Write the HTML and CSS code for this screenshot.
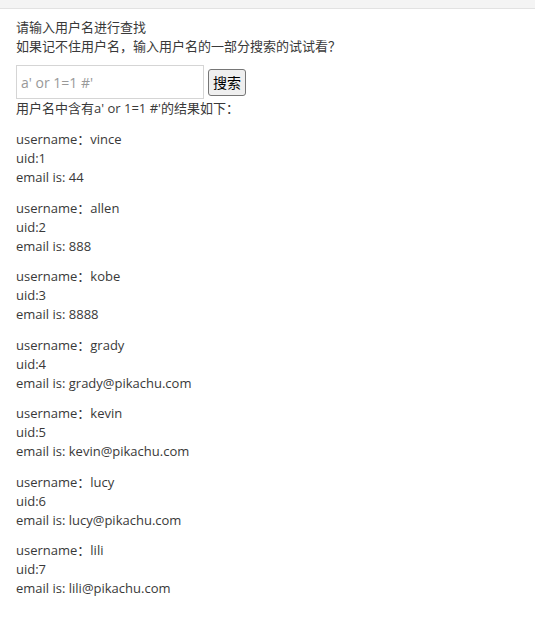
FILE: index.html
```html
<!DOCTYPE html>
<html>
<head>
<meta charset="utf-8">
<link rel="stylesheet" href="styles.css">
</head>
<body>
<div class="topbar"></div>
<div class="main">
  <div class="intro">
    <p class="line">请输入用户名进行查找</p>
    <p class="line">如果记不住用户名，输入用户名的一部分搜索的试试看？</p>
  </div>
  <form class="search">
    <input class="field" type="text" placeholder="a' or 1=1 #'">
    <button class="btn" type="button">搜索</button>
  </form>
  <p class="notice">用户名中含有a' or 1=1 #'的结果如下：</p>
  <div class="results">
    <p class="item">username：vince<br>uid:1<br>email is: 44</p>
    <p class="item">username：allen<br>uid:2<br>email is: 888</p>
    <p class="item">username：kobe<br>uid:3<br>email is: 8888</p>
    <p class="item">username：grady<br>uid:4<br>email is: grady@pikachu.com</p>
    <p class="item">username：kevin<br>uid:5<br>email is: kevin@pikachu.com</p>
    <p class="item">username：lucy<br>uid:6<br>email is: lucy@pikachu.com</p>
    <p class="item">username：lili<br>uid:7<br>email is: lili@pikachu.com</p>
  </div>
</div>
</body>
</html>
```
FILE: styles.css
```css
html, body {
  margin: 0;
  padding: 0;
  background: #fff;
}
body {
  font-family: "Open Sans", "Noto Sans CJK SC", sans-serif;
  font-size: 13px;
  line-height: 19px;
  color: #393939;
}
.topbar {
  height: 8px;
  background: #f4f4f4;
  border-bottom: 1px solid #e2e2e2;
}
.main {
  padding: 9px 16px 0 16px;
}
.line {
  margin: 0;
}
.search {
  display: flex;
  align-items: center;
  gap: 4px;
  margin-top: 9px;
}
.field {
  box-sizing: border-box;
  width: 188px;
  height: 34px;
  border: 1px solid #d5d5d5;
  padding: 0 4px;
  font-family: "Open Sans", sans-serif;
  font-size: 14px;
  color: #393939;
  outline: none;
}
.field::placeholder {
  color: #999;
}
.btn {
  box-sizing: border-box;
  height: 27px;
  width: 38px;
  padding: 0;
  border: 1px solid #767676;
  border-radius: 3px;
  background: #efefef;
  font-family: "Noto Sans CJK SC", sans-serif;
  font-size: 14px;
  color: #000;
}
.notice {
  margin: 0;
}
.results {
  margin-top: 12px;
}
.item {
  margin: 0 0 11.5px 0;
}
```
